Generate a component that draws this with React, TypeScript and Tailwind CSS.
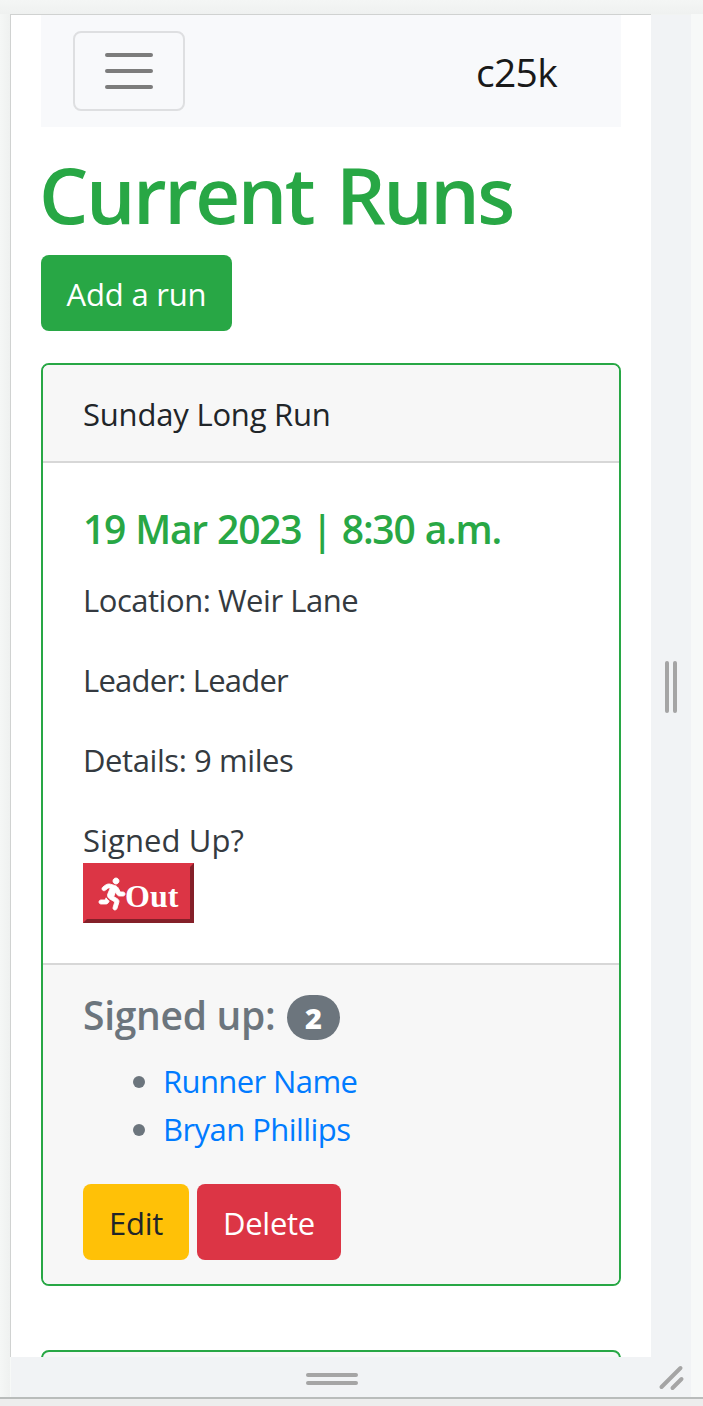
import React from "react";
import { FaRunning } from "react-icons/fa";

const details = [
  { text: "Location: Weir Lane", tracking: "tracking-[-0.47px]" },
  { text: "Leader: Leader", tracking: "tracking-[-0.78px]" },
  { text: "Details: 9 miles", tracking: "tracking-[-0.42px]" },
];

const runners = [
  { name: "Runner Name", tracking: "tracking-[-0.6px]" },
  { name: "Bryan Phillips", tracking: "tracking-[-0.56px]" },
];

function Navbar() {
  return (
    <nav className="flex h-28 shrink-0 items-center justify-between bg-[#f8f9fb] pr-16 pl-8">
      <button
        aria-label="Toggle navigation"
        className="flex h-20 w-28 flex-col items-center justify-center gap-3 rounded-lg border-2 border-[#dedfe1]"
      >
        <span className="h-1 w-12 rounded-full bg-[#7c7c7c]" />
        <span className="h-1 w-12 rounded-full bg-[#7c7c7c]" />
        <span className="h-1 w-12 rounded-full bg-[#7c7c7c]" />
      </button>
      <span className="pt-0.5 text-[39px] leading-[60px] tracking-[-0.7px] text-[#191919]">c25k</span>
    </nav>
  );
}

function RunCard() {
  return (
    <article className="flex shrink-0 flex-col overflow-hidden rounded-lg border-2 border-[#28a745] bg-white">
      <header className="border-b-2 border-[#d7d7d7] bg-[#f7f7f7] px-10 pt-[25px] pb-[23px] text-[31px] leading-[48px] tracking-[-0.2px] text-[#212529]">
        Sunday Long Run
      </header>
      <div className="flex h-[500px] flex-col px-10 pt-[42px] text-[31px] leading-[48px] text-[#343a40]">
        <h5 className="mb-[23px] text-[39px] font-semibold leading-[48px] tracking-[-1.25px] [word-spacing:1.3px] whitespace-nowrap text-[#28a745]">
          19 Mar 2023 | 8:30 a.m.
        </h5>
        {details.map((d) => (
          <p key={d.text} className={`mb-8 ${d.tracking}`}>
            {d.text}
          </p>
        ))}
        <p className="-mb-[5px] tracking-[0.1px]">Signed Up?</p>
        <button className="mt-1 flex h-[60px] w-[111px] shrink-0 items-center border-4 border-t-[#dc3545] border-r-[#842029] border-b-[#842029] border-l-[#dc3545] bg-[#dc3545] pl-3 font-['Liberation_Serif',serif] text-[32px] font-bold leading-9 text-white">
          <FaRunning className="mt-0.5 h-8 w-[26px] shrink-0 overflow-visible" stroke="currentColor" strokeWidth="14" />
          <span className="pt-1.5">Out</span>
        </button>
      </div>
      <footer className="border-t-2 border-[#d7d7d7] bg-[#f7f7f7] px-10 py-6 text-[#6c757d]">
        <h5 className="flex h-[53px] items-center text-[39px] font-semibold leading-[48px]">
          <span className="-mt-0.5 w-[204px] whitespace-nowrap tracking-[-0.3px]">Signed up:</span>
          <span className="mt-1 flex h-[45px] w-[53px] items-center justify-center rounded-full bg-[#6c757d] text-[29px] font-extrabold leading-none text-white">
            2
          </span>
        </h5>
        <ul className="mt-[15px] mb-[31px] list-none pl-[50px] text-[31px] leading-[48px]">
          {runners.map((r) => (
            <li key={r.name} className="flex items-center">
              <span className="mt-0.5 mr-[18px] size-3 shrink-0 rounded-full bg-[#6c757d]" />
              <a className={`text-[#007bff] ${r.tracking}`}>{r.name}</a>
            </li>
          ))}
        </ul>
        <div className="flex gap-2 text-[31px] leading-[48px] tracking-[-0.26px]">
          <button className="h-[76px] w-[106px] rounded-lg bg-[#ffc107] pt-0.5 text-[#212529]">Edit</button>
          <button className="h-[76px] w-36 rounded-lg bg-[#dc3545] pt-0.5 text-white">Delete</button>
        </div>
      </footer>
    </article>
  );
}

export default function App() {
  return (
    <div className="flex h-[1406px] w-[703px] flex-col overflow-hidden bg-[#f7f9f8] font-['Open_Sans','Noto_Sans',sans-serif]">
      <div className="h-3.5 shrink-0 bg-linear-to-b from-[#f4f6f5] to-[#eff1f0]" />
      <div className="flex h-[1383px] shrink-0">
        <div className="w-2.5 shrink-0 bg-linear-to-r from-[#f5f7f6] to-[#eff1f0]" />
        <div className="flex w-[681px] shrink-0 flex-col">
          <div className="flex h-[1343px] shrink-0">
            <main className="flex w-[641px] shrink-0 flex-col overflow-hidden border-t border-l border-[#d0d2d1] bg-white px-[30px]">
              <Navbar />
              <h1 className="mt-4 -ml-0.5 h-24 shrink-0 pt-[3px] text-[78px] font-semibold leading-[96px] tracking-[-2.5px] [word-spacing:5px] whitespace-nowrap text-[#28a745]">
                Current Runs
              </h1>
              <button className="mt-4 h-[76px] w-[191px] shrink-0 rounded-lg bg-[#28a745] pt-0.5 text-[31px] leading-[48px] tracking-[-0.2px] text-white">
                Add a run
              </button>
              <div className="mt-8 flex flex-col gap-16">
                <RunCard />
                <div className="h-24 shrink-0 rounded-t-lg border-2 border-[#28a745] bg-[#f7f7f7]" />
              </div>
            </main>
            <div className="flex w-10 items-center justify-center gap-1 border-t border-[#f1f3f2] bg-[#f1f3f5] pt-0.5">
              <span className="h-[52px] w-1 rounded-full bg-[#a5a5a5]" />
              <span className="h-[52px] w-1 rounded-full bg-[#a5a5a5]" />
            </div>
          </div>
          <div className="ml-px flex h-10 shrink-0 items-center bg-[#f1f3f5]">
            <div className="flex w-[641px] flex-col items-center gap-1 pt-1">
              <span className="h-1 w-[52px] rounded-full bg-[#a5a5a5]" />
              <span className="h-1 w-[52px] rounded-full bg-[#a5a5a5]" />
            </div>
            <svg width="39" height="40" viewBox="0 0 39 40" fill="none" stroke="#a5a5a5" strokeWidth="4" strokeLinecap="round">
              <path d="M9.5 30L28.5 11M20.5 31L29.5 22" />
            </svg>
          </div>
        </div>
        <div className="flex-1 bg-[#f7f9f8]" />
      </div>
      <div className="h-[9px] shrink-0 border-t-2 border-[#b9bcbb] bg-[#ededed]" />
    </div>
  );
}
